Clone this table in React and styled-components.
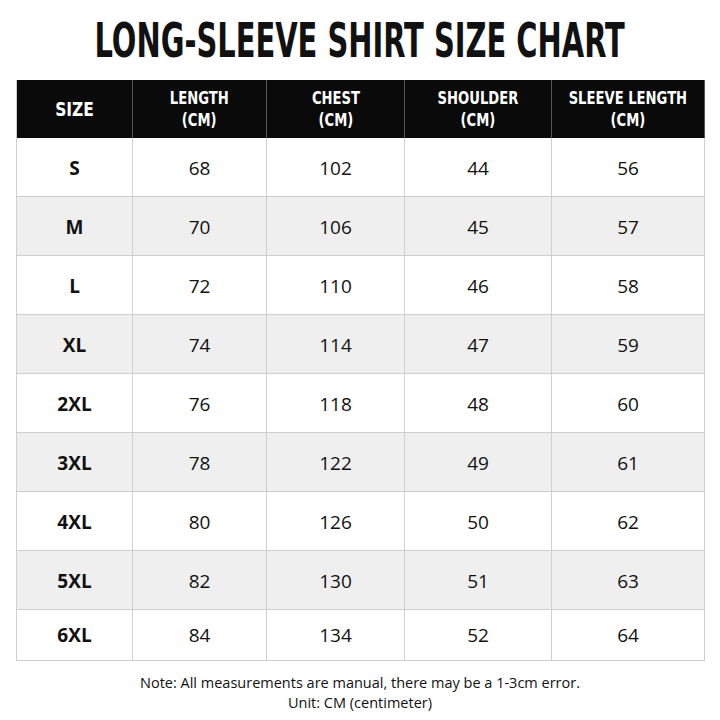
import React from 'react';
import styled, { createGlobalStyle } from 'styled-components';

const GlobalStyle = createGlobalStyle`
  html, body {
    margin: 0;
    padding: 0;
    background: #ffffff;
  }
  body {
    width: 720px;
    height: 720px;
    overflow: hidden;
    font-family: "Open Sans", "Liberation Sans", sans-serif;
  }
`;

const Page = styled.div`
  width: 720px;
  height: 720px;
  display: flex;
  flex-direction: column;
  align-items: center;
  box-sizing: border-box;
  padding-top: 14px;
`;

const Title = styled.h1`
  margin: 0;
  height: 52px;
  font-family: "DejaVu Sans Condensed", "Liberation Sans Narrow", sans-serif;
  font-weight: 700;
  font-size: 48px;
  line-height: 52px;
  color: #111;
  transform: scaleX(0.67);
  white-space: nowrap;
`;

const Table = styled.div`
  margin-top: 14px;
  width: 688px;
  display: grid;
  grid-template-columns: 116px 134px 138px 147px 153px;
  grid-template-rows: 58px repeat(8, 59px) 51px;
  border-left: 1px solid #cfcfcf;
  box-sizing: border-box;
`;

const Head = styled.div`
  background: #0a0a0a;
  color: #fff;
  display: flex;
  align-items: center;
  justify-content: center;
  text-align: center;
  border-right: 1px solid #555;
  font-family: "DejaVu Sans Condensed", "Liberation Sans Narrow", sans-serif;
  font-weight: 700;
  font-size: ${p => (p.$big ? '20px' : '17px')};
  line-height: 22px;
  &:last-child { border-right: none; }
`;

const HeadText = styled.span`
  display: inline-block;
  transform: scaleX(0.86);
  white-space: nowrap;
`;

const Cell = styled.div`
  background: ${p => (p.$shade ? '#efefef' : '#ffffff')};
  display: flex;
  align-items: center;
  justify-content: center;
  border-right: 1px solid #cfcfcf;
  border-bottom: 1px solid #cfcfcf;
  font-size: 19px;
  font-weight: ${p => (p.$bold ? 700 : 400)};
  color: #111;
  padding-top: ${p => (p.$last ? '0' : '2px')};
`;

const Note = styled.div`
  margin-top: 12px;
  font-size: 14.5px;
  line-height: 20px;
  color: #111;
  text-align: center;
`;

const heads = [
  ['SIZE'],
  ['LENGTH', '(CM)'],
  ['CHEST', '(CM)'],
  ['SHOULDER', '(CM)'],
  ['SLEEVE LENGTH', '(CM)'],
];

const rows = [
  ['S', 68, 102, 44, 56],
  ['M', 70, 106, 45, 57],
  ['L', 72, 110, 46, 58],
  ['XL', 74, 114, 47, 59],
  ['2XL', 76, 118, 48, 60],
  ['3XL', 78, 122, 49, 61],
  ['4XL', 80, 126, 50, 62],
  ['5XL', 82, 130, 51, 63],
  ['6XL', 84, 134, 52, 64],
];

export default function App() {
  return (
    <>
      <GlobalStyle />
      <Page>
        <Title>LONG-SLEEVE SHIRT SIZE CHART</Title>
        <Table>
          {heads.map((h, i) => (
            <Head key={i} $big={h.length === 1}>
              <HeadText>
                {h.map((line, j) => (
                  <div key={j}>{line}</div>
                ))}
              </HeadText>
            </Head>
          ))}
          {rows.map((r, ri) =>
            r.map((v, ci) => (
              <Cell
                key={ri + '-' + ci}
                $shade={ri % 2 === 1}
                $bold={ci === 0}
                $last={ri === rows.length - 1}
              >
                {v}
              </Cell>
            ))
          )}
        </Table>
        <Note>
          Note: All measurements are manual, there may be a 1-3cm error.
          <br />
          Unit: CM (centimeter)
        </Note>
      </Page>
    </>
  );
}
